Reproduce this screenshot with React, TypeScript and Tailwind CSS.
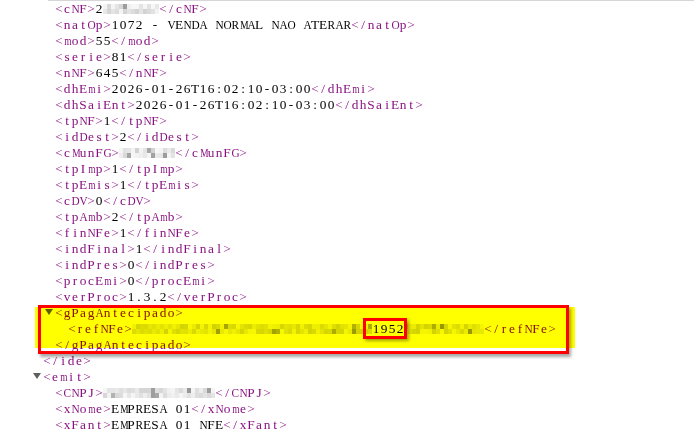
import React from "react";

function shade(seed: number, i: number) {
  const x = Math.sin(seed * 97.13 + i * 12.9898) * 43758.5453;
  const f = x - Math.floor(x);
  let v = 206 + Math.floor(f * 42);
  if (f < 0.1) v = 150 + Math.floor(f * 300);
  return `rgb(${v},${v},${v})`;
}

function Blur({ n, seed }: { n: number; seed: number }) {
  const cols = n * 2;
  return (
    <span className="inline-flex flex-col align-middle -mt-[2px]" style={{ width: n * 8 }}>
      {[0, 1].map((r) => (
        <span key={r} className="flex h-[5px]">
          {Array.from({ length: cols }).map((_, c) => (
            <span key={c} className="w-[4px] h-full shrink-0" style={{ background: shade(seed, r * cols + c) }} />
          ))}
        </span>
      ))}
    </span>
  );
}

const WIDEST = "MWm";
const WIDE = "ANDOVGRCHKUXYQw";

function cellClass(ch: string) {
  if (WIDEST.includes(ch)) return "inline-block w-[8px] text-center scale-x-[0.7]";
  if (WIDE.includes(ch)) return "inline-block w-[8px] text-center scale-x-[0.85]";
  return "inline-block w-[8px] text-center";
}

/* fixed-pitch text: every character sits in an 8px cell, like Courier New 10pt */
function M({ s }: { s: string }) {
  return (
    <>
      {s.split("").map((ch, i) => (
        <span key={i} className={cellClass(ch)}>
          {ch}
        </span>
      ))}
    </>
  );
}

function T({ s }: { s: string }) {
  return (
    <span className="text-[#881280]">
      <M s={s} />
    </span>
  );
}

function El({ name, children }: { name: string; children: React.ReactNode }) {
  return (
    <>
      <T s={`<${name}>`} />
      {children}
      <T s={`</${name}>`} />
    </>
  );
}

function Tri() {
  return (
    <span className="inline-block w-[10px] align-middle -mt-[3px]">
      <svg width="8" height="6" viewBox="0 0 8 6" className="block">
        <polygon points="0,0 8,0 4,6" fill="#5f5f5f" />
      </svg>
    </span>
  );
}

const simple: [string, string][] = [
  ["natOp", "1072 - VENDA NORMAL NAO ATERAR"],
  ["mod", "55"],
  ["serie", "81"],
  ["nNF", "645"],
  ["dhEmi", "2026-01-26T16:02:10-03:00"],
  ["dhSaiEnt", "2026-01-26T16:02:10-03:00"],
  ["tpNF", "1"],
  ["idDest", "2"],
];

const simple2: [string, string][] = [
  ["tpImp", "1"],
  ["tpEmis", "1"],
  ["cDV", "0"],
  ["tpAmb", "2"],
  ["finNFe", "1"],
  ["indFinal", "1"],
  ["indPres", "0"],
  ["procEmi", "0"],
  ["verProc", "1.3.2"],
];

export default function App() {
  return (
    <div className="w-[694px] h-[437px] overflow-hidden bg-white text-black font-['Liberation_Serif',serif] text-[13.333px] leading-[16px] whitespace-pre">
      <div className="h-px ml-[48px] bg-[#d6d6d6]" />
      <div className="pl-[55px]">
        <El name="cNF">
          <M s="2" />
          <Blur n={7} seed={1} />
        </El>
      </div>
      {simple.map(([k, v]) => (
        <div key={k} className="pl-[55px]">
          <El name={k}>
            <M s={v} />
          </El>
        </div>
      ))}
      <div className="pl-[55px]">
        <El name="cMunFG">
          <Blur n={7} seed={2} />
        </El>
      </div>
      {simple2.map(([k, v]) => (
        <div key={k} className="pl-[55px]">
          <El name={k}>
            <M s={v} />
          </El>
        </div>
      ))}
      <div className="relative">
        <span className="absolute left-[35px] top-[2px] w-[540px] h-[41px] bg-[#ffff00] mix-blend-multiply z-10" />
        <div className="pl-[45px]">
          <Tri />
          <T s="<gPagAntecipado>" />
        </div>
        <div className="pl-[68px]">
          <El name="refNFe">
            <Blur n={30} seed={3} />
            <M s="1952" />
            <Blur n={10} seed={4} />
          </El>
        </div>
        <div className="pl-[55px]">
          <T s="</gPagAntecipado>" />
        </div>
        <div className="absolute left-[38px] top-0 w-[531px] h-[49px] border-[3px] border-[#ff0000] shadow-[2px_3px_3px_rgba(0,0,0,0.35)] z-20" />
        <div className="absolute left-[363px] top-[13px] w-[44px] h-[21px] border-[3px] border-[#ff0000] shadow-[2px_2px_3px_rgba(0,0,0,0.35)] z-20" />
      </div>
      <div className="pl-[43px]">
        <T s="</ide>" />
      </div>
      <div className="pl-[33px]">
        <Tri />
        <T s="<emit>" />
      </div>
      <div className="pl-[55px]">
        <El name="CNPJ">
          <Blur n={14} seed={5} />
        </El>
      </div>
      <div className="pl-[55px]">
        <El name="xNome">
          <M s="EMPRESA 01" />
        </El>
      </div>
      <div className="pl-[55px]">
        <El name="xFant">
          <M s="EMPRESA 01 NFE" />
        </El>
      </div>
    </div>
  );
}
